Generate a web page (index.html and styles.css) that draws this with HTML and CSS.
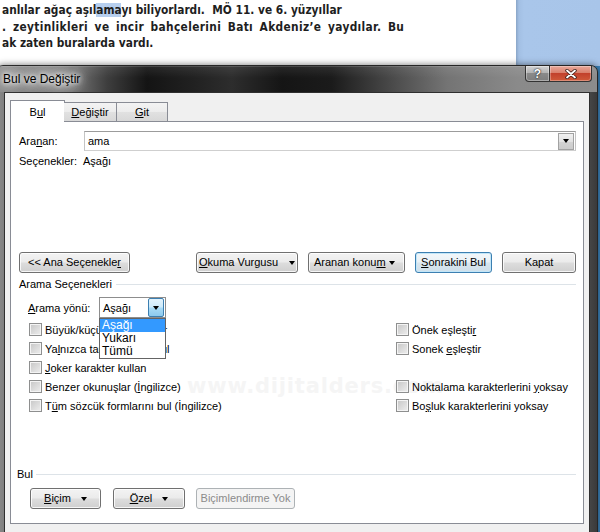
FILE: index.html
```html
<!DOCTYPE html>
<html lang="tr">
<head>
<meta charset="utf-8">
<title>Bul ve Değiştir</title>
<link rel="stylesheet" href="styles.css">
</head>
<body>
<div class="screen">
  <div class="doc">
    <div class="page">
      <p class="line">anlılar ağaç aşıl<span class="hl">ama</span>yı biliyorlardı.&nbsp; MÖ 11. ve 6. yüzyıllar</p>
      <p class="line line-justified">. zeytinlikleri ve incir bahçelerini Batı Akdeniz’e yaydılar. Bu</p>
      <p class="line">ak zaten buralarda vardı.</p>
    </div>
    <div class="desk"></div>
  </div>

  <div class="dialog">
    <div class="titlebar">
      <span class="title">Bul ve Değiştir</span>
      <div class="caption">
        <span class="cap cap-help">?</span>
        <span class="cap cap-close">
          <svg width="12" height="10" viewBox="0 0 12 10"><path d="M2 1.5 L10 8.5 M10 1.5 L2 8.5" stroke="#3a1a14" stroke-width="3.4" stroke-linecap="round"/><path d="M2 1.5 L10 8.5 M10 1.5 L2 8.5" stroke="#fff" stroke-width="1.8" stroke-linecap="round"/></svg>
        </span>
      </div>
    </div>
    <div class="client">
      <div class="tabs">
        <div class="tab tab-active">B<u>u</u>l</div>
        <div class="tab tab-replace"><u>D</u>eğiştir</div>
        <div class="tab tab-goto"><u>G</u>it</div>
      </div>
      <div class="panel">
        <div class="watermark">www.dijitalders.com</div>

        <div class="find-row">
          <span class="find-label">Ara<u>n</u>an:</span>
          <div class="combo">
            <span class="combo-text">ama</span>
            <span class="combo-btn"><i class="tri"></i></span>
          </div>
        </div>
        <div class="info-row"><span class="info-label">Seçenekler:</span><span>Aşağı</span></div>

        <div class="actions">
          <div class="btn btn-less">&lt;&lt; Ana Seçenekle<u>r</u></div>
          <div class="actions-right">
            <div class="btn btn-menu btn-read"><span><u>O</u>kuma Vurgusu</span><i class="tri"></i></div>
            <div class="btn btn-menu btn-where"><span>Aranan konu<u>m</u></span><i class="tri"></i></div>
            <div class="btn btn-default btn-next"><u>S</u>onrakini Bul</div>
            <div class="btn btn-close">Kapat</div>
          </div>
        </div>

        <div class="group-title"><span>Arama Seçenekleri</span><i class="rule"></i></div>

        <div class="dir-row">
          <span class="dir-label"><u>A</u>rama yönü:</span>
          <div class="select">
            <span class="select-text">Aşağı</span>
            <span class="select-btn"><i class="tri"></i></span>
            <ul class="select-list">
              <li class="sel">Aşağı</li>
              <li>Yukarı</li>
              <li>Tümü</li>
            </ul>
          </div>
        </div>

        <div class="checks">
          <div class="check"><i class="box"></i><span>Büyük/küçük harf eşleştir</span></div>
          <div class="check"><i class="box"></i><span>Önek eşleşti<u>r</u></span></div>
          <div class="check"><i class="box"></i><span>Ya<u>l</u>nızca tam sözcüğü bul</span></div>
          <div class="check"><i class="box"></i><span>Sonek <u>e</u>şleştir</span></div>
          <div class="check"><i class="box"></i><span><u>J</u>oker karakter kullan</span></div>
          <div class="check-empty"></div>
          <div class="check"><i class="box"></i><span>Benzer okunuşlar (<u>İ</u>ngilizce)</span></div>
          <div class="check"><i class="box"></i><span>Noktalama karakterlerini <u>y</u>oksay</span></div>
          <div class="check"><i class="box"></i><span>T<u>ü</u>m sözcük formlarını bul (İngilizce)</span></div>
          <div class="check"><i class="box"></i><span>Bo<u>ş</u>luk karakterlerini yoksay</span></div>
        </div>

        <div class="group-title group-find"><span>Bul</span><i class="rule"></i></div>

        <div class="format-row">
          <div class="btn btn-fmt btn-format"><span><u>B</u>içim</span><i class="tri"></i></div>
          <div class="btn btn-fmt btn-special"><span><u>Ö</u>zel</span><i class="tri"></i></div>
          <div class="btn btn-disabled btn-noformat">Biçimlendirme Yok</div>
        </div>
      </div>
    </div>
  </div>
</div>
</body>
</html>
```

FILE: styles.css
```css
* { box-sizing: border-box; }
html, body { margin: 0; padding: 0; }
body {
  width: 600px;
  height: 532px;
  overflow: hidden;
  font-family: "Liberation Sans", Arial, sans-serif;
  font-size: 11px;
  color: #000;
}
u { text-decoration: underline; text-underline-offset: 1px; }

.screen {
  position: relative;
  width: 600px;
  height: 532px;
  overflow: hidden;
  background: #3d85bd;
}

/* document behind the dialog */
.doc { display: flex; height: 66px; }
.page {
  width: 516px;
  background: #fff;
  padding: 2px 0 0 2px;
  font-family: "DejaVu Sans Condensed", "DejaVu Sans", sans-serif;
  font-stretch: condensed;
  font-weight: bold;
  font-size: 11.8px;
  color: #1e1e1e;
}
.line { margin: 0; height: 16.7px; line-height: 16.7px; white-space: nowrap; }
.line-justified { word-spacing: 2.5px; letter-spacing: 0.35px; }
.hl { background: #b7cfee; }
.desk {
  flex: 1;
  background: linear-gradient(to right, #8aa6c8 0, #a3c0e4 3px, #a9c6ea 8px, #a8c5e9 100%);
}

/* dialog window */
.dialog {
  position: absolute;
  left: -4px;
  top: 65px;
  width: 602px;
  height: 480px;
  border: 1px solid #262626;
  border-radius: 7px 7px 0 0;
  background: linear-gradient(to right, #8b8b8b 0, #7a7a7a 10px, #2a2a2a 60px, #2a2a2a 560px, #474747 592px, #3a3a3a 100%);
  box-shadow: 0 0 7px rgba(0, 0, 0, 0.55);
}
.titlebar {
  position: relative;
  display: flex;
  align-items: flex-start;
  height: 26px;
  padding-left: 6px;
  border-radius: 6px 6px 0 0;
  background:
    linear-gradient(to bottom, rgba(255,255,255,0.35) 0, rgba(255,255,255,0.08) 1px, rgba(255,255,255,0) 12px),
    linear-gradient(to right, #8f8f8f 0, #7e7e7e 70px, #3e3e3e 110px, #141414 150px, #222 200px, #2d2d2d 235px, #151515 285px, #1b1b1b 335px, #4a4a4a 395px, #747474 450px, #8a8a8a 520px, #8c8c8c 100%);
}
.title {
  margin-top: 6px;
  font-size: 12px;
  line-height: 14px;
  color: #000;
  text-shadow: 0 0 4px #fff, 0 0 8px #fff, 0 0 12px rgba(255,255,255,0.9), 0 0 16px rgba(255,255,255,0.7);
}
.caption {
  position: absolute;
  right: 5px;
  top: 0;
  display: flex;
  height: 16px;
}
.cap {
  display: flex;
  align-items: center;
  justify-content: center;
  height: 16px;
  border: 1px solid #333;
  border-top: none;
}
.cap-help {
  width: 25px;
  border-radius: 0 0 0 4px;
  background: linear-gradient(to bottom, #d3d3d3 0, #b3b3b3 45%, #8a8a8a 50%, #7e7e7e 100%);
  box-shadow: inset 0 0 0 1px rgba(255,255,255,0.35);
  color: #fff;
  font-weight: bold;
  font-size: 12px;
  text-shadow: 0 0 1px #222, 0 0 2px #222;
}
.cap-close {
  width: 42px;
  border-left: none;
  border-radius: 0 0 4px 0;
  background: linear-gradient(to bottom, #e9a99b 0, #d9806c 45%, #c2412c 50%, #cf5a3a 100%);
  box-shadow: inset 0 0 0 1px rgba(255,255,255,0.3);
}

.client {
  margin: 0 7px;
  height: 460px;
  padding: 7px 5px 0 5px;
  background: #f0f0f0;
  border: 1px solid #2f2f2f;
  border-bottom: none;
}

/* tabs */
.tabs {
  position: relative;
  z-index: 2;
  display: flex;
  align-items: flex-end;
  height: 21px;
}
.tab {
  height: 19px;
  line-height: 18px;
  text-align: center;
  border: 1px solid #898c95;
  border-bottom: none;
  background: linear-gradient(to bottom, #f3f3f3 0, #ececec 50%, #e1e1e1 51%, #d8d8d8 100%);
}
.tab-active {
  width: 55px;
  height: 22px;
  line-height: 22px;
  margin-bottom: -1px;
  background: #fff;
}
.tab-replace { width: 53px; margin-left: -1px; border-left: none; }
.tab-goto { width: 52px; margin-left: -1px; }

/* white tab page */
.panel {
  position: relative;
  height: 403px;
  padding: 0 7px 0 8px;
  background: #fff;
  border: 1px solid #898c95;
}
.watermark {
  position: absolute;
  left: 176px;
  top: 252px;
  font-family: "DejaVu Sans", sans-serif;
  font-weight: bold;
  font-size: 21px;
  letter-spacing: 0.8px;
  color: #f5f5f5;
  white-space: nowrap;
}

.find-row { display: flex; align-items: center; margin-top: 9px; height: 20px; position: relative; }
.find-label { width: 65px; }
.combo {
  flex: 1;
  display: flex;
  align-items: center;
  height: 20px;
  padding: 0 1px 0 3px;
  border: 1px solid #a5a5a5;
  border-color: #9c9c9c #c4c4c4 #cfcfcf #c4c4c4;
  background: #fff;
}
.combo-text { flex: 1; }
.combo-btn {
  display: flex;
  align-items: center;
  justify-content: center;
  width: 16px;
  height: 17px;
  border: 1px solid #a2a2a2;
  background: linear-gradient(to bottom, #f1f1f1 0, #e2e2e2 50%, #d3d3d3 51%, #cbcbcb 100%);
}
.tri {
  display: inline-block;
  width: 0;
  height: 0;
  border-left: 3.5px solid transparent;
  border-right: 3.5px solid transparent;
  border-top: 4px solid #000;
}

.info-row { display: flex; margin-top: 3px; height: 14px; line-height: 14px; position: relative; }
.info-label { width: 64px; }

/* command buttons */
.btn {
  display: flex;
  align-items: center;
  justify-content: center;
  height: 21px;
  line-height: 19px;
  white-space: nowrap;
  border: 1px solid #707070;
  border-radius: 3px;
  background: linear-gradient(to bottom, #f3f3f3 0, #ebebeb 48%, #dddddd 52%, #cfcfcf 100%);
  box-shadow: inset 0 0 0 1px rgba(255,255,255,0.8);
}
.actions { display: flex; justify-content: space-between; margin-top: 84px; position: relative; }
.actions-right { display: flex; gap: 10px; }
.btn-less { width: 111px; }
.btn-menu { justify-content: space-between; }
.btn-read { width: 102px; padding: 0 2px 0 2px; }
.btn-where { width: 97px; padding: 0 9px 0 5px; }
.btn-next { width: 77px; }
.btn-close { width: 74px; }
.btn-default {
  border-color: #3c7fb1;
  background: linear-gradient(to bottom, #f2f7fa 0, #e9f1f6 48%, #d9e6ee 52%, #cfdfea 100%);
  box-shadow: inset 0 0 0 1px #c2e6f8;
}

.group-title {
  display: flex;
  align-items: center;
  height: 14px;
  line-height: 14px;
  margin-top: 4px;
  position: relative;
}
.rule { flex: 1; height: 1px; margin-left: 4px; background: #dde3e8; }

.dir-row { position: relative; z-index: 3; display: flex; align-items: center; height: 21px; margin-top: 6px; }
.dir-label { width: 71px; margin-left: 9px; }
.select {
  position: relative;
  display: flex;
  align-items: center;
  width: 67px;
  height: 21px;
  padding: 0 1px 0 3px;
  border: 1px solid #8d8d8d;
  background: #fff;
}
.select-text { flex: 1; }
.select-btn {
  display: flex;
  align-items: center;
  justify-content: center;
  width: 16px;
  height: 19px;
  border: 1px solid #3c7fb1;
  border-radius: 2px;
  background: linear-gradient(to bottom, #e3f3fc 0, #cdeafa 48%, #a9dbf6 52%, #8ccaee 100%);
}
.select-list {
  position: absolute;
  left: -1px;
  top: 20px;
  width: 67px;
  margin: 0;
  padding: 0;
  list-style: none;
  background: #fff;
  border: 1px solid #646464;
  font-size: 12px;
}
.select-list li { height: 13px; line-height: 13px; padding-left: 2px; }
.select-list li.sel { background: #3399ff; color: #fff; }

.checks {
  display: grid;
  grid-template-columns: 367px auto;
  grid-auto-rows: 19px;
  margin-top: 2px;
  padding-left: 10px;
  position: relative;
}
.check { display: flex; align-items: center; white-space: nowrap; }
.box {
  flex: none;
  width: 13px;
  height: 13px;
  margin-right: 3px;
  border: 1px solid #8e8f8f;
  background: linear-gradient(135deg, #c6c6c6 0, #dadada 50%, #eeeeee 100%);
  box-shadow: inset 0 0 0 1px #f4f4f4;
}

.group-find { margin-top: 52px; margin-left: -2px; }
.group-find .rule { margin-left: 3px; }

.format-row { display: flex; margin-top: 7px; margin-left: 11px; gap: 12px; position: relative; }
.btn-fmt { gap: 10px; }
.btn-format { width: 71px; }
.btn-special { width: 72px; }
.btn-noformat { width: 99px; margin-left: -1px; }
.btn-disabled {
  color: #8b8b8b;
  border-color: #adb2b5;
  background: #f4f4f4;
  box-shadow: none;
}
```
